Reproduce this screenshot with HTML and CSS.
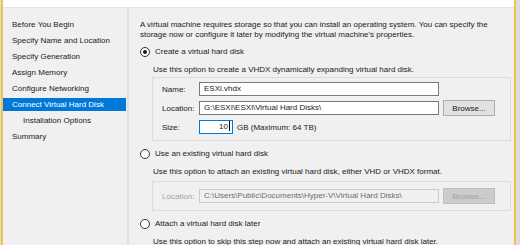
FILE: index.html
```html
<!DOCTYPE html>
<html lang="en">
<head>
  <meta charset="UTF-8" />
  <title>New Virtual Machine Wizard</title>
  <link rel="stylesheet" href="styles.css">
</head>
<body>
  <div class="window">
    <div class="header"></div>
    <div class="main">

      <!-- wizard steps -->
      <nav class="steps">
        <div class="step">Before You Begin</div>
        <div class="step">Specify Name and Location</div>
        <div class="step">Specify Generation</div>
        <div class="step">Assign Memory</div>
        <div class="step">Configure Networking</div>
        <div class="step active">Connect Virtual Hard Disk</div>
        <div class="step sub">Installation Options</div>
        <div class="step">Summary</div>
      </nav>

      <!-- page content -->
      <section class="content">
        <p class="intro">A virtual machine requires storage so that you can install an operating system. You can specify the<br>
        storage now or configure it later by modifying the virtual machine's properties.</p>

        <div class="option">
          <div class="radio-row"><span class="radio checked"></span>Create a virtual hard disk</div>
          <div class="desc">Use this option to create a VHDX dynamically expanding virtual hard disk.</div>
          <div class="group">
            <div class="field">
              <span class="label">Name:</span>
              <div class="textbox wide">ESXi.vhdx</div>
            </div>
            <div class="field">
              <span class="label">Location:</span>
              <div class="textbox wide">G:\ESXI\ESXi\Virtual Hard Disks\</div>
              <button class="btn">Browse...</button>
            </div>
            <div class="field">
              <span class="label">Size:</span>
              <div class="textbox size focused">10<span class="caret"></span></div>
              <span class="unit">GB (Maximum: 64 TB)</span>
            </div>
          </div>
        </div>

        <div class="option">
          <div class="radio-row"><span class="radio"></span>Use an existing virtual hard disk</div>
          <div class="desc">Use this option to attach an existing virtual hard disk, either VHD or VHDX format.</div>
          <div class="group small">
            <div class="field">
              <span class="label disabled">Location:</span>
              <div class="textbox wide disabled">C:\Users\Public\Documents\Hyper-V\Virtual Hard Disks\</div>
              <button class="btn disabled">Browse...</button>
            </div>
          </div>
        </div>

        <div class="option">
          <div class="radio-row"><span class="radio"></span>Attach a virtual hard disk later</div>
          <div class="desc">Use this option to skip this step now and attach an existing virtual hard disk later.</div>
        </div>
      </section>

    </div>
  </div>
</body>
</html>
```
FILE: styles.css
```css
body {
  margin: 0;
  width: 520px;
  height: 245px;
  overflow: hidden;
  background: #dcdcdc;
  font-family: "Liberation Sans", Arial, sans-serif;
  font-size: 8px;
  color: #1a1a1a;
}
.window {
  margin-left: 1px;
  width: 515px;
  height: 245px;
  box-sizing: border-box;
  border-left: 2px solid #f4c24a;
  border-right: 2px solid #f4c24a;
  background: #f0f0f0;
  overflow: hidden;
}
.header {
  height: 7px;
  background: #ffffff;
  border-bottom: 1px solid #e3e3e3;
}
.main {
  display: flex;
  height: 237px;
}
.steps {
  width: 124px;
  padding-top: 10px;
  border-right: 2px solid #dedede;
  flex-shrink: 0;
}
.step {
  height: 13px;
  line-height: 13px;
  margin: 0 1px 3px 0;
  padding-left: 9px;
  white-space: nowrap;
}
.step.sub {
  padding-left: 20px;
}
.step.active {
  background: #0078d7;
  color: #ffffff;
}
.content {
  padding: 12px 0 0 11px;
  width: 362px;
}
.intro {
  margin: 0;
  line-height: 10px;
  white-space: nowrap;
}
.option {
  margin-top: 7px;
}
.option + .option {
  margin-top: 8px;
}
.radio-row {
  display: flex;
  align-items: center;
  height: 10px;
  line-height: 10px;
}
.radio {
  width: 8px;
  height: 8px;
  border: 1px solid #333333;
  border-radius: 50%;
  background: #ffffff;
  margin-right: 5px;
  position: relative;
}
.radio.checked::after {
  content: "";
  position: absolute;
  left: 2px;
  top: 2px;
  width: 4px;
  height: 4px;
  border-radius: 50%;
  background: #1a1a1a;
}
.desc {
  margin: 8px 0 0 13px;
  line-height: 10px;
  white-space: nowrap;
}
.group {
  margin: 2px 0 0 12px;
  width: 348px;
  border: 1px solid #dcdcdc;
  padding: 4px 0 6px 9px;
  display: flex;
  flex-direction: column;
  gap: 5px;
}
.group.small {
  margin-top: 4px;
  padding: 7px 0 7px 9px;
}
.field {
  display: flex;
  align-items: center;
  height: 14px;
}
.label {
  width: 37px;
}
.label.disabled {
  color: #a0a0a0;
}
.textbox {
  height: 12px;
  line-height: 12px;
  border: 1px solid #7a7a7a;
  background: #ffffff;
  padding-left: 4px;
  white-space: nowrap;
  overflow: hidden;
  box-sizing: content-box;
}
.textbox.wide {
  width: 234px;
}
.textbox.disabled {
  border-color: #cccccc;
  background: #f0f0f0;
  color: #6d6d6d;
}
.textbox.size {
  width: 30px;
  padding: 0 2px 0 0;
  text-align: right;
}
.textbox.focused {
  border-color: #0078d7;
}
.caret {
  display: inline-block;
  width: 1px;
  height: 10px;
  background: #000000;
  vertical-align: -2px;
  margin-left: 1px;
}
.unit {
  margin-left: 4px;
}
.btn {
  margin: -1px 0 -1px 4px;
  width: 52px;
  height: 16px;
  padding: 0;
  font: inherit;
  color: #1a1a1a;
  background: #e1e1e1;
  border: 1px solid #adadad;
}
.btn.disabled {
  background: #cccccc;
  border-color: #bfbfbf;
  color: #a0a0a0;
}
```
